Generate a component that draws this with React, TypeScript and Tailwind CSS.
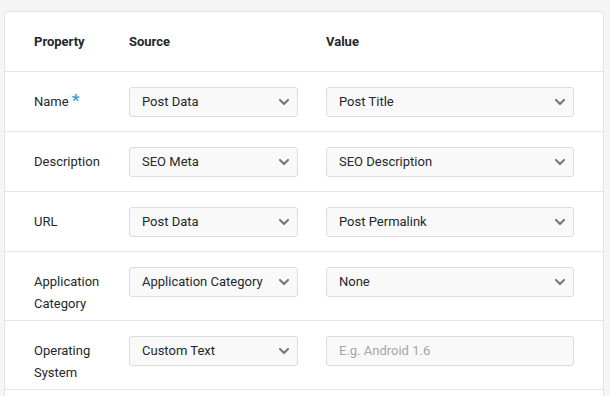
import { ChevronDown } from 'lucide-react';

type Row = {
  label: string[];
  required?: boolean;
  source: string;
  value?: string;
  placeholder?: string;
};

const ROWS: Row[] = [
  { label: ['Name'], required: true, source: 'Post Data', value: 'Post Title' },
  { label: ['Description'], source: 'SEO Meta', value: 'SEO Description' },
  { label: ['URL'], source: 'Post Data', value: 'Post Permalink' },
  { label: ['Application', 'Category'], source: 'Application Category', value: 'None' },
  { label: ['Operating', 'System'], source: 'Custom Text', placeholder: 'E.g. Android 1.6' },
];

function FakeSelect({ text, width }: { text: string; width: string }) {
  return (
    <div
      className={`${width} h-[30px] shrink-0 flex items-center justify-between pl-3 pr-[5px] rounded-[3px] border border-[#dcdcdc] bg-[#f9f9f9] text-[13px] text-[#23282d]`}
    >
      <span className="truncate">{text}</span>
      <ChevronDown className="w-4 h-4 text-[#7a7a7a]" strokeWidth={3.2} />
    </div>
  );
}

export default function App() {
  return (
    <div className="min-h-screen bg-[#f5f5f5] pt-[11px] pl-1 pr-[6px] font-['Roboto','Liberation_Sans',sans-serif]">
      <div className="bg-white border border-[#e2e2e2] rounded-t-[4px]">
        {/* header */}
        <div className="h-[59px] flex items-center px-[29px] text-[13px] font-bold text-[#23282d]">
          <div className="w-[95px]">Property</div>
          <div className="w-[197px]">Source</div>
          <div>Value</div>
        </div>

        {ROWS.map(r => (
          <div
            key={r.label.join(' ')}
            className="flex items-start min-h-[60px] pt-[15px] pb-[5px] px-[29px] border-t border-[#e5e5e5]"
          >
            <div className="w-[95px] shrink-0 pt-1 text-[13px] leading-[22px] text-[#23282d]">
              {r.label.map((l, i) => (
                <div key={i}>
                  {l}
                  {r.required && (
                    <span className="ml-[3px] text-[17px] leading-none font-bold text-[#3e9ad6]">*</span>
                  )}
                </div>
              ))}
            </div>
            <FakeSelect text={r.source} width="w-[169px]" />
            <div className="w-[28px] shrink-0" />
            {r.value ? (
              <FakeSelect text={r.value} width="w-[248px]" />
            ) : (
              <div className="w-[248px] h-[30px] shrink-0 flex items-center px-3 rounded-[3px] border border-[#dcdcdc] bg-[#f9f9f9] text-[13px] text-[#a6a6a6]">
                {r.placeholder}
              </div>
            )}
          </div>
        ))}

        {/* next row, cut off below the fold */}
        <div className="h-5 border-t border-[#e5e5e5]" />
      </div>
    </div>
  );
}
